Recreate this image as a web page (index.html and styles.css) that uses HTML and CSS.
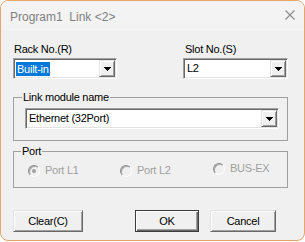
FILE: index.html
```html
<!DOCTYPE html>
<html lang="en">
<head>
    <meta charset="UTF-8">
    <meta name="viewport" content="width=device-width, initial-scale=1.0">
    <title>Program1 Link &lt;2&gt;</title>
    <link rel="stylesheet" href="styles.css">
</head>
<body>
    <div class="dialog">
        <div class="titlebar">
            <span class="title">Program1  Link &lt;2&gt;</span>
            <svg class="close" width="10" height="10" viewBox="0 0 10 10">
                <path d="M0.5 0.5 L9.5 9.5 M9.5 0.5 L0.5 9.5" stroke="#8a8a8a" stroke-width="1.1" fill="none"/>
            </svg>
        </div>

        <div class="content">
            <div class="top-row">
                <div class="field rack">
                    <label class="field-label">Rack No.(R)</label>
                    <div class="combo">
                        <span class="value"><span class="selected">Built-in</span></span>
                        <span class="drop">
                            <svg width="7" height="4" viewBox="0 0 7 4" shape-rendering="crispEdges">
                                <rect x="0" y="0" width="7" height="1"/>
                                <rect x="1" y="1" width="5" height="1"/>
                                <rect x="2" y="2" width="3" height="1"/>
                                <rect x="3" y="3" width="1" height="1"/>
                            </svg>
                        </span>
                    </div>
                </div>
                <div class="field slot">
                    <label class="field-label">Slot No.(S)</label>
                    <div class="combo">
                        <span class="value">L2</span>
                        <span class="drop">
                            <svg width="7" height="4" viewBox="0 0 7 4" shape-rendering="crispEdges">
                                <rect x="0" y="0" width="7" height="1"/>
                                <rect x="1" y="1" width="5" height="1"/>
                                <rect x="2" y="2" width="3" height="1"/>
                                <rect x="3" y="3" width="1" height="1"/>
                            </svg>
                        </span>
                    </div>
                </div>
            </div>

            <fieldset class="group link-group">
                <legend>Link module name</legend>
                <div class="combo wide">
                    <span class="value">Ethernet (32Port)</span>
                    <span class="drop">
                        <svg width="7" height="4" viewBox="0 0 7 4" shape-rendering="crispEdges">
                            <rect x="0" y="0" width="7" height="1"/>
                            <rect x="1" y="1" width="5" height="1"/>
                            <rect x="2" y="2" width="3" height="1"/>
                            <rect x="3" y="3" width="1" height="1"/>
                        </svg>
                    </span>
                </div>
            </fieldset>

            <fieldset class="group port-group">
                <legend>Port</legend>
                <div class="radios">
                    <div class="radio checked"><span class="circle"></span><span>Port L1</span></div>
                    <div class="radio"><span class="circle"></span><span>Port L2</span></div>
                    <div class="radio raised"><span class="circle"></span><span>BUS-EX</span></div>
                </div>
            </fieldset>

            <div class="buttons">
                <button class="btn clear">Clear(C)</button>
                <button class="btn ok">OK</button>
                <button class="btn cancel">Cancel</button>
            </div>
        </div>
    </div>
</body>
</html>
```

FILE: styles.css
```css
html, body {
    margin: 0;
    background-color: #fff;
}

body {
    font-family: "Liberation Sans", Arial, sans-serif;
    font-size: 11px;
    line-height: 13px;
    letter-spacing: -0.25px;
    color: #000;
}

.dialog {
    width: 305px;
    height: 241px;
    box-sizing: border-box;
    border: 1px solid #e5a56b;
    border-radius: 8px;
    background-color: #f0f0f0;
    overflow: hidden;
}

.titlebar {
    height: 30px;
    display: flex;
    justify-content: space-between;
    align-items: flex-start;
    padding: 9px 9px 0 9px;
    box-sizing: border-box;
    background-color: #f3f3f3;
}

.title {
    font-size: 12px;
    line-height: 14px;
    letter-spacing: 0;
    color: #808080;
    white-space: pre;
}

.close {
    display: block;
}

.content {
    padding: 12px 16px 0 12px;
}

.top-row {
    display: flex;
    justify-content: space-between;
}

.field {
    display: flex;
    flex-direction: column;
    gap: 2px;
}

.rack {
    width: 104px;
}

.slot {
    width: 105px;
}

.slot .field-label {
    padding-left: 2px;
}

.rack .field-label {
    padding-left: 1px;
}

.combo {
    height: 21px;
    box-sizing: border-box;
    display: flex;
    align-items: center;
    padding: 1px;
    background-color: #fff;
    border: 1px solid;
    border-color: #a0a0a0 #fff #fff #a0a0a0;
    box-shadow: inset 1px 1px 0 #696969, inset -1px -1px 0 #e3e3e3;
}

.combo.wide {
    width: 254px;
}

.value {
    flex: 1;
    padding-left: 2px;
    white-space: nowrap;
}

.selected {
    display: inline-block;
    height: 14px;
    line-height: 14px;
    padding: 0 1px;
    margin-left: -1px;
    background-color: #0078d7;
    color: #fff;
}

.drop {
    width: 16px;
    height: 17px;
    box-sizing: border-box;
    display: flex;
    align-items: center;
    justify-content: center;
    padding-top: 1px;
    background-color: #f0f0f0;
    border: 1px solid;
    border-color: #e3e3e3 #696969 #696969 #e3e3e3;
    box-shadow: inset 1px 1px 0 #fff, inset -1px -1px 0 #a0a0a0;
}

.drop svg {
    display: block;
    fill: #000;
}

.group {
    margin: 0;
    min-width: 0;
    border: 1px solid #a0a0a0;
}

.group legend {
    padding: 0 1px;
    line-height: 13px;
}

.link-group {
    margin-top: 12px;
    padding: 4px 9px 11px 11px;
}

.link-group legend {
    margin-left: -3px;
}

.port-group {
    margin-top: 4px;
    padding: 6px 9px 10px 14px;
}

.port-group legend {
    margin-left: -7px;
}

.radios {
    display: grid;
    grid-template-columns: 92px 93px auto;
    align-items: start;
    height: 13px;
}

.radio {
    display: flex;
    align-items: center;
    gap: 5px;
    color: #a0a0a0;
    height: 13px;
}

.radio.raised {
    margin-top: -2px;
}

.circle {
    width: 12px;
    height: 12px;
    box-sizing: border-box;
    border-radius: 50%;
    border: 1px solid;
    border-color: #8c8c8c #fff #fff #8c8c8c;
    box-shadow: inset 1px 1px 0 #a8a8a8;
    background-color: #f0f0f0;
    display: flex;
    align-items: center;
    justify-content: center;
}

.radio.checked .circle::after {
    content: "";
    width: 4px;
    height: 4px;
    border-radius: 50%;
    background-color: #a0a0a0;
}

.buttons {
    display: flex;
    gap: 11px;
    margin-top: 22px;
}

.btn {
    height: 22px;
    box-sizing: border-box;
    padding: 0;
    font-family: "Liberation Sans", Arial, sans-serif;
    font-size: 11px;
    letter-spacing: -0.25px;
    color: #000;
    background-color: #f0f0f0;
    border: 1px solid;
    border-color: #e3e3e3 #696969 #696969 #e3e3e3;
    box-shadow: inset 1px 1px 0 #fff, inset -1px -1px 0 #a0a0a0;
}

.clear {
    width: 70px;
}

.ok {
    width: 64px;
    margin-left: 41px;
    border-color: #3c3c3c;
    box-shadow: inset 1px 1px 0 #fff, inset -1px -1px 0 #696969, inset -2px -2px 0 #a0a0a0;
}

.cancel {
    width: 66px;
}
```
